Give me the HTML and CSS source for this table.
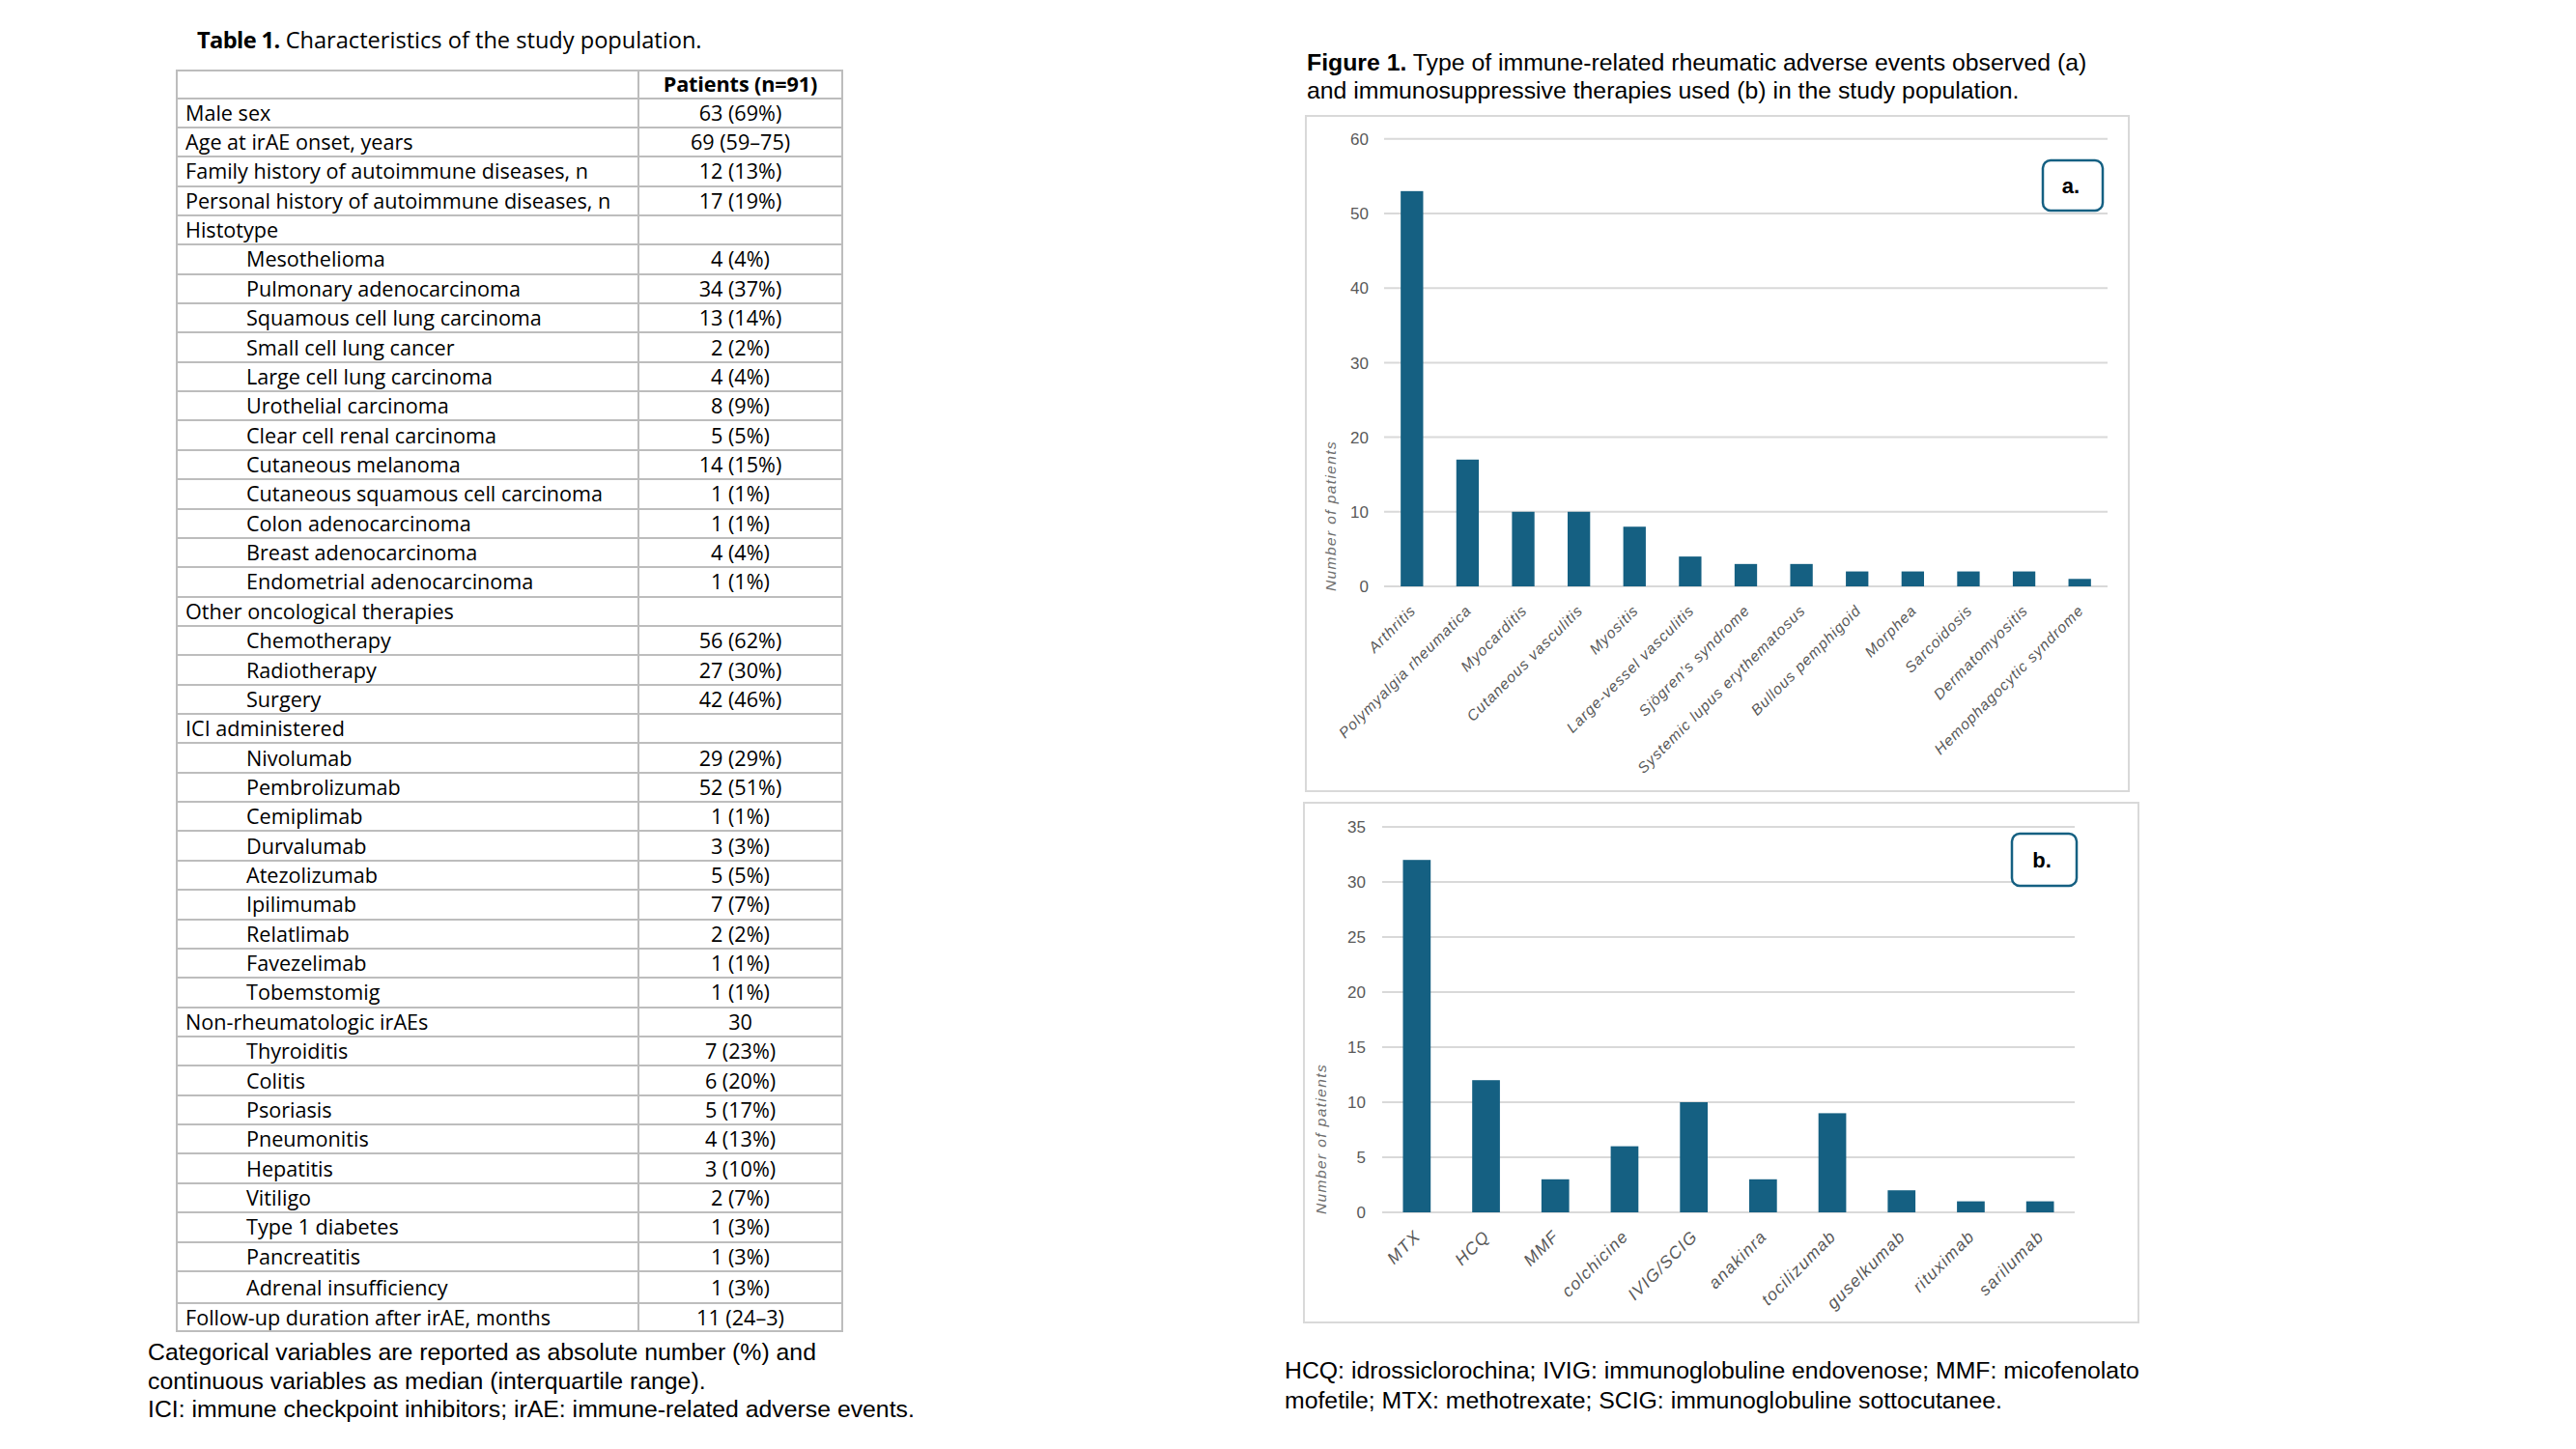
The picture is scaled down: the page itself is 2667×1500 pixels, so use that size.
FILE: index.html
```html
<!DOCTYPE html>
<html lang="en">
<head>
<meta charset="utf-8">
<title>Table 1 and Figure 1</title>
<link rel="stylesheet" href="styles.css">
</head>
<body>
<div class="page">
  <section class="left">
    <h1 class="tab-title"><b>Table 1.</b> Characteristics of the study population.</h1>
    <table class="chars">
      <tr class="head"><td></td><td class="v"><b>Patients (n=91)</b></td></tr>
      <tr><td>Male sex</td><td class="v">63 (69%)</td></tr>
      <tr><td>Age at irAE onset, years</td><td class="v">69 (59–75)</td></tr>
      <tr><td>Family history of autoimmune diseases, n</td><td class="v">12 (13%)</td></tr>
      <tr><td>Personal history of autoimmune diseases, n</td><td class="v">17 (19%)</td></tr>
      <tr><td>Histotype</td><td class="v"></td></tr>
      <tr><td class="in">Mesothelioma</td><td class="v">4 (4%)</td></tr>
      <tr><td class="in">Pulmonary adenocarcinoma</td><td class="v">34 (37%)</td></tr>
      <tr><td class="in">Squamous cell lung carcinoma</td><td class="v">13 (14%)</td></tr>
      <tr><td class="in">Small cell lung cancer</td><td class="v">2 (2%)</td></tr>
      <tr><td class="in">Large cell lung carcinoma</td><td class="v">4 (4%)</td></tr>
      <tr><td class="in">Urothelial carcinoma</td><td class="v">8 (9%)</td></tr>
      <tr><td class="in">Clear cell renal carcinoma</td><td class="v">5 (5%)</td></tr>
      <tr><td class="in">Cutaneous melanoma</td><td class="v">14 (15%)</td></tr>
      <tr><td class="in">Cutaneous squamous cell carcinoma</td><td class="v">1 (1%)</td></tr>
      <tr><td class="in">Colon adenocarcinoma</td><td class="v">1 (1%)</td></tr>
      <tr><td class="in">Breast adenocarcinoma</td><td class="v">4 (4%)</td></tr>
      <tr><td class="in">Endometrial adenocarcinoma</td><td class="v">1 (1%)</td></tr>
      <tr><td>Other oncological therapies</td><td class="v"></td></tr>
      <tr><td class="in">Chemotherapy</td><td class="v">56 (62%)</td></tr>
      <tr><td class="in">Radiotherapy</td><td class="v">27 (30%)</td></tr>
      <tr><td class="in">Surgery</td><td class="v">42 (46%)</td></tr>
      <tr><td>ICI administered</td><td class="v"></td></tr>
      <tr><td class="in">Nivolumab</td><td class="v">29 (29%)</td></tr>
      <tr><td class="in">Pembrolizumab</td><td class="v">52 (51%)</td></tr>
      <tr><td class="in">Cemiplimab</td><td class="v">1 (1%)</td></tr>
      <tr><td class="in">Durvalumab</td><td class="v">3 (3%)</td></tr>
      <tr><td class="in">Atezolizumab</td><td class="v">5 (5%)</td></tr>
      <tr><td class="in">Ipilimumab</td><td class="v">7 (7%)</td></tr>
      <tr><td class="in">Relatlimab</td><td class="v">2 (2%)</td></tr>
      <tr><td class="in">Favezelimab</td><td class="v">1 (1%)</td></tr>
      <tr><td class="in">Tobemstomig</td><td class="v">1 (1%)</td></tr>
      <tr><td>Non-rheumatologic irAEs</td><td class="v">30</td></tr>
      <tr><td class="in">Thyroiditis</td><td class="v">7 (23%)</td></tr>
      <tr><td class="in">Colitis</td><td class="v">6 (20%)</td></tr>
      <tr><td class="in">Psoriasis</td><td class="v">5 (17%)</td></tr>
      <tr><td class="in">Pneumonitis</td><td class="v">4 (13%)</td></tr>
      <tr><td class="in">Hepatitis</td><td class="v">3 (10%)</td></tr>
      <tr><td class="in">Vitiligo</td><td class="v">2 (7%)</td></tr>
      <tr><td class="in">Type 1 diabetes</td><td class="v">1 (3%)</td></tr>
      <tr><td class="in">Pancreatitis</td><td class="v">1 (3%)</td></tr>
      <tr class="tall"><td class="in">Adrenal insufficiency</td><td class="v">1 (3%)</td></tr>
      <tr class="last"><td>Follow-up duration after irAE, months</td><td class="v">11 (24–3)</td></tr>
    </table>
    <p class="note">Categorical variables are reported as absolute number (%) and<br>continuous variables as median (interquartile range).<br>ICI: immune checkpoint inhibitors; irAE: immune-related adverse events.</p>
  </section>

  <section class="right">
    <h2 class="fig-title"><b>Figure 1.</b> Type of immune-related rheumatic adverse events observed (a)<br>and immunosuppressive therapies used (b) in the study population.</h2>

    <div class="chart chart-a">
      <svg class="plot" width="850" height="697" viewBox="0 0 850 697">
        <g class="grid">
          <line x1="80" x2="829" y1="22.8" y2="22.8"/>
          <line x1="80" x2="829" y1="100" y2="100"/>
          <line x1="80" x2="829" y1="177.2" y2="177.2"/>
          <line x1="80" x2="829" y1="254.4" y2="254.4"/>
          <line x1="80" x2="829" y1="331.6" y2="331.6"/>
          <line x1="80" x2="829" y1="408.8" y2="408.8"/>
          <line x1="80" x2="829" y1="486" y2="486"/>
        </g>
        <g class="tick">
          <text x="64" y="22.8" dy="0.36em">60</text>
          <text x="64" y="100" dy="0.36em">50</text>
          <text x="64" y="177.2" dy="0.36em">40</text>
          <text x="64" y="254.4" dy="0.36em">30</text>
          <text x="64" y="331.6" dy="0.36em">20</text>
          <text x="64" y="408.8" dy="0.36em">10</text>
          <text x="64" y="486" dy="0.36em">0</text>
        </g>
        <g class="bars">
          <rect x="97.16" y="76.84" width="23.3" height="409.16"/>
          <rect x="154.77" y="354.76" width="23.3" height="131.24"/>
          <rect x="212.39" y="408.8" width="23.3" height="77.2"/>
          <rect x="270.0" y="408.8" width="23.3" height="77.2"/>
          <rect x="327.62" y="424.24" width="23.3" height="61.76"/>
          <rect x="385.23" y="455.12" width="23.3" height="30.88"/>
          <rect x="442.85" y="462.84" width="23.3" height="23.16"/>
          <rect x="500.46" y="462.84" width="23.3" height="23.16"/>
          <rect x="558.08" y="470.56" width="23.3" height="15.44"/>
          <rect x="615.69" y="470.56" width="23.3" height="15.44"/>
          <rect x="673.31" y="470.56" width="23.3" height="15.44"/>
          <rect x="730.92" y="470.56" width="23.3" height="15.44"/>
          <rect x="788.54" y="478.28" width="23.3" height="7.72"/>
        </g>
        <g class="xl">
          <text x="113.81" y="512" transform="rotate(-45 113.81 512)">Arthritis</text>
          <text x="171.42" y="512" transform="rotate(-45 171.42 512)">Polymyalgia rheumatica</text>
          <text x="229.04" y="512" transform="rotate(-45 229.04 512)">Myocarditis</text>
          <text x="286.65" y="512" transform="rotate(-45 286.65 512)">Cutaneous vasculitis</text>
          <text x="344.27" y="512" transform="rotate(-45 344.27 512)">Myositis</text>
          <text x="401.88" y="512" transform="rotate(-45 401.88 512)">Large-vessel vasculitis</text>
          <text x="459.5" y="512" transform="rotate(-45 459.5 512)">Sjögren’s syndrome</text>
          <text x="517.11" y="512" transform="rotate(-45 517.11 512)">Systemic lupus erythematosus</text>
          <text x="574.73" y="512" transform="rotate(-45 574.73 512)">Bullous pemphigoid</text>
          <text x="632.34" y="512" transform="rotate(-45 632.34 512)">Morphea</text>
          <text x="689.96" y="512" transform="rotate(-45 689.96 512)">Sarcoidosis</text>
          <text x="747.57" y="512" transform="rotate(-45 747.57 512)">Dermatomyositis</text>
          <text x="805.19" y="512" transform="rotate(-45 805.19 512)">Hemophagocytic syndrome</text>
        </g>
        <text class="yt" x="30" y="491" transform="rotate(-90 30 491)">Number of patients</text>
        <rect class="tag" x="762" y="45" width="62" height="52" rx="8" ry="8"/>
        <text class="tag-t" x="791" y="79">a.</text>
      </svg>
    </div>

    <div class="chart chart-b">
      <svg class="plot" width="862" height="536" viewBox="0 0 862 536">
        <g class="grid">
          <line x1="80" x2="797" y1="24" y2="24"/>
          <line x1="80" x2="797" y1="81" y2="81"/>
          <line x1="80" x2="797" y1="138" y2="138"/>
          <line x1="80" x2="797" y1="195" y2="195"/>
          <line x1="80" x2="797" y1="252" y2="252"/>
          <line x1="80" x2="797" y1="309" y2="309"/>
          <line x1="80" x2="797" y1="366" y2="366"/>
          <line x1="80" x2="797" y1="423" y2="423"/>
        </g>
        <g class="tick">
          <text x="63" y="24" dy="0.36em">35</text>
          <text x="63" y="81" dy="0.36em">30</text>
          <text x="63" y="138" dy="0.36em">25</text>
          <text x="63" y="195" dy="0.36em">20</text>
          <text x="63" y="252" dy="0.36em">15</text>
          <text x="63" y="309" dy="0.36em">10</text>
          <text x="63" y="366" dy="0.36em">5</text>
          <text x="63" y="423" dy="0.36em">0</text>
        </g>
        <g class="bars">
          <rect x="101.5" y="58.2" width="28.7" height="364.8"/>
          <rect x="173.2" y="286.2" width="28.7" height="136.8"/>
          <rect x="244.9" y="388.8" width="28.7" height="34.2"/>
          <rect x="316.6" y="354.6" width="28.7" height="68.4"/>
          <rect x="388.3" y="309" width="28.7" height="114"/>
          <rect x="460.0" y="388.8" width="28.7" height="34.2"/>
          <rect x="531.7" y="320.4" width="28.7" height="102.6"/>
          <rect x="603.4" y="400.2" width="28.7" height="22.8"/>
          <rect x="675.1" y="411.6" width="28.7" height="11.4"/>
          <rect x="746.8" y="411.6" width="28.7" height="11.4"/>
        </g>
        <g class="xl xl-b">
          <text x="120.85" y="449" transform="rotate(-45 120.85 449)">MTX</text>
          <text x="192.55" y="449" transform="rotate(-45 192.55 449)">HCQ</text>
          <text x="264.25" y="449" transform="rotate(-45 264.25 449)">MMF</text>
          <text x="335.95" y="449" transform="rotate(-45 335.95 449)">colchicine</text>
          <text x="407.65" y="449" transform="rotate(-45 407.65 449)">IVIG/SCIG</text>
          <text x="479.35" y="449" transform="rotate(-45 479.35 449)">anakinra</text>
          <text x="551.05" y="449" transform="rotate(-45 551.05 449)">tocilizumab</text>
          <text x="622.75" y="449" transform="rotate(-45 622.75 449)">guselkumab</text>
          <text x="694.45" y="449" transform="rotate(-45 694.45 449)">rituximab</text>
          <text x="766.15" y="449" transform="rotate(-45 766.15 449)">sarilumab</text>
        </g>
        <text class="yt" x="22" y="425" transform="rotate(-90 22 425)">Number of patients</text>
        <rect class="tag" x="732" y="31" width="67" height="54" rx="8" ry="8"/>
        <text class="tag-t" x="763" y="66">b.</text>
      </svg>
    </div>

    <p class="fig-note">HCQ: idrossiclorochina; IVIG: immunoglobuline endovenose; MMF: micofenolato<br>mofetile; MTX: methotrexate; SCIG: immunoglobuline sottocutanee.</p>
  </section>
</div>
</body>
</html>
```

FILE: styles.css
```css
html, body {
  margin: 0;
  padding: 0;
  background: #ffffff;
}

body {
  width: 2667px;
  height: 1500px;
  overflow: hidden;
  color: #000000;
  font-family: "Liberation Sans", Arial, sans-serif;
}

.page {
  display: flex;
  align-items: flex-start;
  padding-left: 153px;
}

/* ---------- left column: table ---------- */
.left {
  width: 730px;
  flex: none;
  padding-top: 26px;
}

.tab-title {
  margin: 0 0 0 51px;
  font-family: "Open Sans", "Noto Sans", sans-serif;
  font-size: 23.6px;
  font-weight: 400;
  line-height: 30px;
  white-space: nowrap;
}

.tab-title b {
  font-weight: 700;
  letter-spacing: -0.6px;
}

.chars {
  margin: 16px 0 0 29px;
  width: 691px;
  border-collapse: collapse;
  table-layout: fixed;
  font-family: "Open Sans", "Noto Sans", sans-serif;
  font-size: 21.6px;
  line-height: 26px;
}

.chars tr {
  height: 30.36px;
}

.chars tr.head {
  height: 28.5px;
}

.chars tr.tall {
  height: 33.5px;
}

.chars tr.last {
  height: 29px;
}

.chars td {
  border: 2px solid #bdbdbd;
  padding: 0 0 0 8px;
  vertical-align: middle;
  white-space: nowrap;
  overflow: hidden;
}

.chars td.in {
  padding-left: 71px;
}

.chars td.v {
  width: 209px;
  padding: 0;
  text-align: center;
}

.chars td.v b {
  font-weight: 700;
  letter-spacing: -0.1px;
}

.note {
  margin: 6px 0 0 0;
  font-size: 24.8px;
  line-height: 29.5px;
  white-space: nowrap;
}

/* ---------- right column: figure ---------- */
.right {
  flex: none;
  margin-left: 447px;
  width: 900px;
  padding-top: 51px;
}

.fig-title {
  margin: 0 0 0 23px;
  font-size: 24.8px;
  font-weight: 400;
  line-height: 28.5px;
  white-space: nowrap;
}

.fig-title b {
  font-weight: 700;
}

.chart {
  border: 2px solid #d9d9d9;
  background: #ffffff;
}

.chart .plot {
  display: block;
}

.chart-a {
  width: 850px;
  height: 697px;
  margin: 11px 0 0 21px;
}

.chart-b {
  width: 862px;
  height: 536px;
  margin: 10px 0 0 19px;
}

.grid line {
  stroke: #d9d9d9;
  stroke-width: 2;
}

.bars rect {
  fill: #156082;
}

.tick text {
  font-family: "Liberation Sans", Arial, sans-serif;
  font-size: 17px;
  fill: #595959;
  text-anchor: end;
}

.xl text {
  font-family: "Liberation Sans", Arial, sans-serif;
  font-size: 15.5px;
  font-style: italic;
  letter-spacing: 1px;
  fill: #595959;
  text-anchor: end;
}

.xl-b text {
  font-size: 17.5px;
  letter-spacing: 1.2px;
}

.yt {
  font-family: "Liberation Sans", Arial, sans-serif;
  font-size: 15.5px;
  font-style: italic;
  letter-spacing: 1.4px;
  fill: #6e6e6e;
}

.tag {
  fill: #ffffff;
  stroke: #156082;
  stroke-width: 2.5;
}

.tag-t {
  font-family: "Liberation Sans", Arial, sans-serif;
  font-size: 22px;
  font-weight: 700;
  fill: #000000;
  text-anchor: middle;
}

.fig-note {
  margin: 34px 0 0 0;
  font-size: 24.8px;
  line-height: 30.5px;
  white-space: nowrap;
}
```
